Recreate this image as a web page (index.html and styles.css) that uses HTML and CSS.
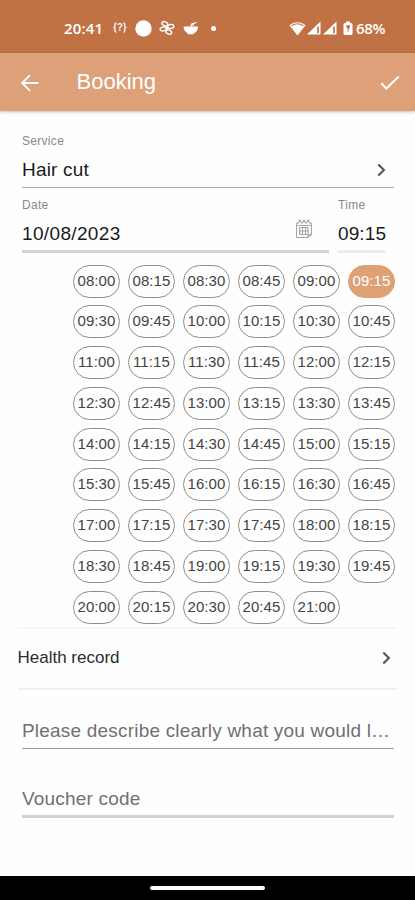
FILE: index.html
```html
<!DOCTYPE html>
<html lang="en">
<head>
<meta charset="utf-8">
<title>Booking</title>
<link rel="stylesheet" href="styles.css">
</head>
<body>
<div class="screen">
  <div class="status">
    <span class="clock">20:41</span>
    <span class="debug">{?}</span>
    <svg class="dot" width="17" height="17" viewBox="0 0 17 17"><circle cx="8.5" cy="8.5" r="8.2" fill="#fff"/></svg>
    <svg class="fan" width="16" height="16" viewBox="0 0 16 16" fill="none" stroke="#fff" stroke-width="1.400"><ellipse cx="5.800" cy="3.8" rx="3" ry="2" transform="rotate(22 5.800 3.8)"/><ellipse cx="11.7" cy="6.500" rx="3.200" ry="2" transform="rotate(-8 11.7 6.500)"/><ellipse cx="4.2" cy="9" rx="3.2" ry="1.900" transform="rotate(-8 4.2 9)"/><ellipse cx="9.800" cy="12" rx="3" ry="2" transform="rotate(22 9.800 12)"/><circle cx="8" cy="7.7" r="1" fill="#fff"/></svg>
    <svg class="bowl" width="16" height="14" viewBox="0 0 16 14"><path d="M.5 5.500h14.500C15 9 13 11.500 10.800 12.300v1h-6v-1C2.500 11.300.7 9 .5 5.500z" fill="#fff"/><path d="M7.500 5.500L9 2.800l4.500-1.300M9.300 2.500l1.500 2.500" fill="none" stroke="#fff" stroke-width="1.300"/></svg>
    <i class="more"></i>
    <svg class="wifi" width="17" height="15" viewBox="0 0 17 15"><path d="M.5 4.200C5 .3 12 .3 16.500 4.200L8.500 14.500z" fill="#fff"/><path d="M2.600 4.700c3.500-2.300 8.300-2.300 11.800 0" fill="none" stroke="#c17244" stroke-width="1.200"/></svg>
    <svg class="signal" width="14" height="14" viewBox="0 0 14 14"><path d="M0 13.500L13.500.5v13z" fill="#fff"/><path d="M10.200 5.500h1.700v6.700h-1.700z" fill="#c17244"/></svg>
    <svg class="signal" width="14" height="14" viewBox="0 0 14 14"><path d="M0 13.500L13.500.5v13z" fill="#fff"/><path d="M10.200 5.500h1.700v6.700h-1.700z" fill="#c17244"/></svg>
    <svg class="battery" width="10" height="15" viewBox="0 0 10 15"><path d="M3 .5h4V2h1q1.500 0 1.500 1.500v9Q9.500 14 8 14H2Q.5 14 .5 12.500v-9Q.5 2 2 2h1z" fill="#fff"/><path d="M3.300 4.200h3.500v3L5.500 8.700v2.500H4.700V7.800L3.300 6z" fill="#c17244"/></svg>
    <span class="charge">68%</span>
  </div>
  <header class="bar">
    <svg width="20" height="18" viewBox="0 0 20 18" fill="none" stroke="#fff" stroke-width="1.900"><path d="M18.500 9H2.500M10 1.200L2.200 9l7.800 7.800"/></svg>
    <h1>Booking</h1>
    <svg class="check" width="20" height="16" viewBox="0 0 20 16" fill="none" stroke="#fff" stroke-width="2.200"><path d="M1.200 8.300l5.200 5.200L18.700 1.500"/></svg>
  </header>
  <main>
    <section class="field service">
      <label>Service</label>
      <div class="value"><span>Hair cut</span><svg class="chev" width="9" height="14" viewBox="0 0 9 14"><path d="M1.300 1.500L6.900 7l-5.600 5.500"/></svg></div>
    </section>
    <div class="when">
      <section class="field date">
        <label>Date</label>
        <div class="value"><span>10/08/2023</span><svg class="cal" width="18" height="20" viewBox="0 0 18 20" fill="none" stroke="#a6a6a6" stroke-width="1.100"><path d="M1.500 4v14.500h11.500l3.500-3V4M1.500 6.500h15M13 18.500v-3h3.500M1.500 4h2l1.500-3 1.500 3h1L9 1l1.500 3h1L13 1l1.500 3h2"/><path d="M4.500 8.500h8.500v7H4.500zM7.500 8.500v7M10.500 8.500v7M4.500 12h8.500"/></svg></div>
      </section>
      <section class="field time">
        <label>Time</label>
        <div class="value"><span>09:15</span></div>
      </section>
    </div>
    <div class="slots">
      <b>08:00</b><b>08:15</b><b>08:30</b><b>08:45</b><b>09:00</b><b class="on">09:15</b>
      <b>09:30</b><b>09:45</b><b>10:00</b><b>10:15</b><b>10:30</b><b>10:45</b>
      <b>11:00</b><b>11:15</b><b>11:30</b><b>11:45</b><b>12:00</b><b>12:15</b>
      <b>12:30</b><b>12:45</b><b>13:00</b><b>13:15</b><b>13:30</b><b>13:45</b>
      <b>14:00</b><b>14:15</b><b>14:30</b><b>14:45</b><b>15:00</b><b>15:15</b>
      <b>15:30</b><b>15:45</b><b>16:00</b><b>16:15</b><b>16:30</b><b>16:45</b>
      <b>17:00</b><b>17:15</b><b>17:30</b><b>17:45</b><b>18:00</b><b>18:15</b>
      <b>18:30</b><b>18:45</b><b>19:00</b><b>19:15</b><b>19:30</b><b>19:45</b>
      <b>20:00</b><b>20:15</b><b>20:30</b><b>20:45</b><b>21:00</b>
    </div>
    <div class="record"><span>Health record</span><svg class="chev" width="9" height="14" viewBox="0 0 9 14"><path d="M1.300 1.500L6.900 7l-5.600 5.500"/></svg></div>
    <div class="input note">Please describe clearly what you would l…</div>
    <div class="input voucher">Voucher code</div>
  </main>
  <footer class="nav"><i></i></footer>
</div>
</body>
</html>
```
FILE: styles.css
```css
* { box-sizing: border-box; }
body { margin: 0; background: #fefefe; font-family: "Liberation Sans", Arial, sans-serif; color: #2c2c2c; }
svg { display: block; flex: none; }
.screen { width: 415px; height: 900px; display: flex; flex-direction: column; overflow: hidden; }
.status { height: 53px; flex: none; background: #c17244; color: #fff; display: flex; align-items: center; padding: 3px 0 0 64px; font: 500 15.5px/20px Roboto, sans-serif; }
.clock { width: 49px; font-family: "Open Sans", sans-serif; font-weight: 600; font-size: 15px; letter-spacing: .15px; }
.debug { width: 22px; font-size: 11px; letter-spacing: .5px; }
.fan { margin-left: 7px; }
.bowl { margin-left: 8px; }
.more { width: 5px; height: 5px; border-radius: 50%; background: #fff; margin-left: 12px; }
.wifi { margin-left: 73px; }
.signal { margin-left: 1px; }
.signal + .signal { margin-left: 2px; }
.battery { margin-left: 6px; }
.charge { margin-left: 3px; font-family: "Open Sans", sans-serif; font-weight: 600; font-size: 15px; letter-spacing: -.35px; }
.bar { height: 58px; flex: none; background: #dda079; display: flex; align-items: center; padding: 1px 15px 0 20px; box-shadow: 0 1px 3px rgba(0,0,0,.25); }
.bar h1 { margin: -2px auto 0 36.500px; font-size: 22px; line-height: 26px; font-weight: 400; color: #fff; }
main { flex: 1; padding: 22px 21px 0 22px; }
.field label { display: block; font-size: 12px; line-height: 16px; letter-spacing: .3px; color: #888; }
.value { display: flex; justify-content: space-between; align-items: center; font-size: 19px; line-height: 26px; letter-spacing: .2px; color: #1a1a1a; }
.chev { fill: none; stroke: #555; stroke-width: 2.1; }
.service { height: 55px; border-bottom: 1.500px solid #aaa; }
.service .value { margin-top: 8px; }
.service .chev { margin-right: 8px; }
.when { display: flex; gap: 9px; height: 65px; margin-top: 9px; }
.when .value { margin-top: 8px; height: 26px; }
.date { width: 307px; height: 56px; border-bottom: 3px solid #d5d5d5; }
.date .value { letter-spacing: .35px; }
.cal { margin: -10px 16px 0 0; }
.time { width: 48px; height: 56px; border-bottom: 3px solid #ececec; }
.time .value { letter-spacing: .1px; }
.slots { display: grid; grid-template-columns: repeat(6, 47px); grid-auto-rows: 33px; column-gap: 8px; row-gap: 7.8px; margin: 2.500px 0 0 51px; }
.slots b { border: 1px solid #8c8c8c; border-radius: 17px; font-size: 15px; font-weight: 400; line-height: 30px; text-align: center; letter-spacing: .1px; color: #444; white-space: nowrap; }
.slots .on { background: #dfa076; border-color: #dfa076; color: #fff; }
.record { display: flex; justify-content: space-between; align-items: center; height: 63px; margin: 3px -3px 0 -4.500px; padding-right: 6px; border-top: 2px solid #f6f6f6; border-bottom: 2px solid #efefef; font-size: 17px; }
.input { font-size: 19px; line-height: 26px; letter-spacing: .2px; color: #707070; white-space: nowrap; }
.note { height: 31px; margin-top: 28px; border-bottom: 1.500px solid #999; }
.voucher { height: 32px; margin-top: 37px; border-bottom: 3px solid #d2d2d2; }
.nav { height: 24px; flex: none; background: #000; display: flex; justify-content: center; align-items: center; }
.nav i { width: 115px; height: 4px; border-radius: 2px; background: #fff; }
```
